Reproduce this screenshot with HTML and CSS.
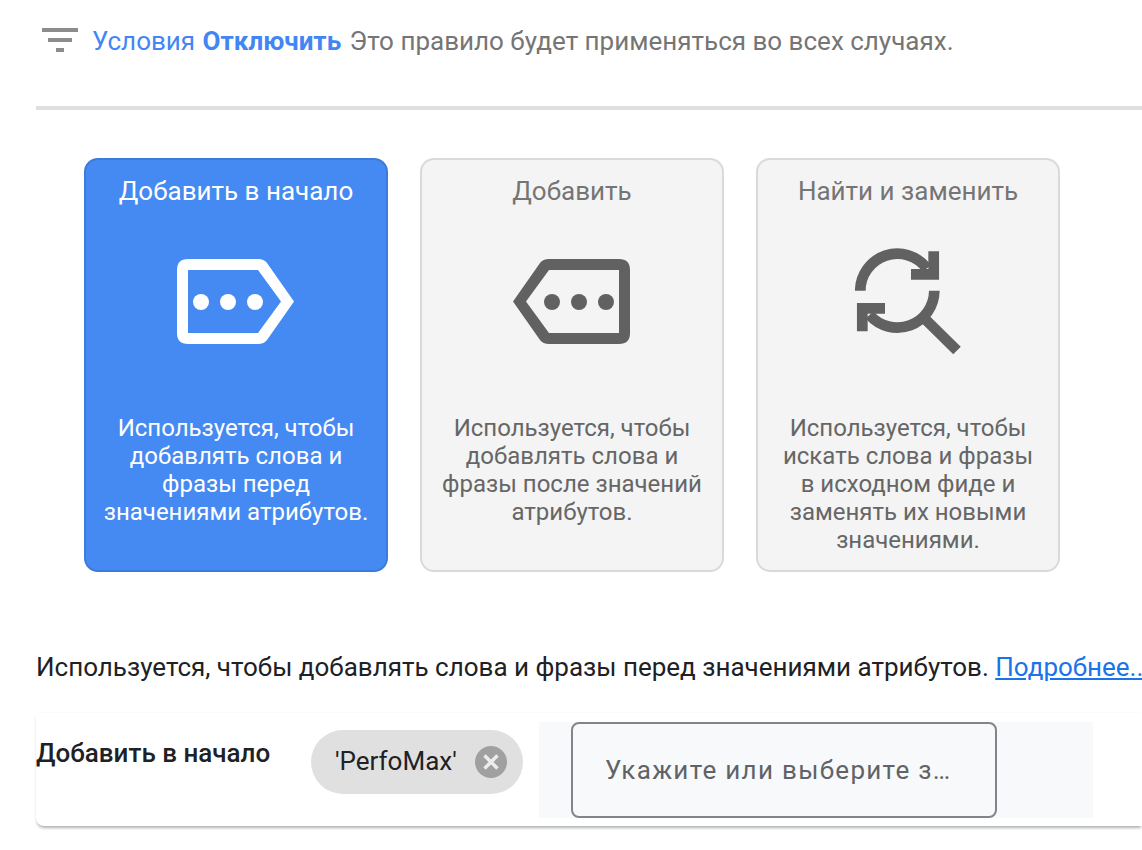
FILE: index.html
```html
<!DOCTYPE html>
<html lang="ru">
<head>
  <meta charset="UTF-8" />
  <meta name="viewport" content="width=device-width, initial-scale=1" />
  <title>Правило</title>
  <link rel="stylesheet" href="styles.css">
</head>
<body>
  <div class="conditions">
    <svg class="filter-icon" width="36" height="24" viewBox="0 0 36 24">
      <rect x="0" y="0" width="36" height="4" />
      <rect x="6" y="10" width="24" height="4" />
      <rect x="14" y="20" width="8" height="4" />
    </svg>
    <span class="conditions-text">
      <a class="cond-link">Условия</a>
      <a class="cond-link cond-off">Отключить</a>
      Это правило будет применяться во всех случаях.
    </span>
  </div>

  <div class="cards">
    <div class="card selected">
      <div class="card-title">Добавить в начало</div>
      <div class="card-icon">
        <svg class="tag-icon flip" width="117" height="85" viewBox="0 0 117 85">
          <path fill-rule="evenodd" d="M0 42.5 L27 4 Q30 0 36 0 H106 Q117 0 117 11 V74 Q117 85 106 85 H36 Q30 85 27 81 Z M36 11 L13 42.5 L36 74 H106 V11 Z" />
          <circle cx="39" cy="43" r="8" />
          <circle cx="66" cy="43" r="8" />
          <circle cx="93" cy="43" r="8" />
        </svg>
      </div>
      <div class="card-desc">Используется, чтобы добавлять слова и фразы перед значениями атрибутов.</div>
    </div>
    <div class="card">
      <div class="card-title">Добавить</div>
      <div class="card-icon">
        <svg class="tag-icon" width="117" height="85" viewBox="0 0 117 85">
          <path fill-rule="evenodd" d="M0 42.5 L27 4 Q30 0 36 0 H106 Q117 0 117 11 V74 Q117 85 106 85 H36 Q30 85 27 81 Z M36 11 L13 42.5 L36 74 H106 V11 Z" />
          <circle cx="39" cy="43" r="8" />
          <circle cx="66" cy="43" r="8" />
          <circle cx="93" cy="43" r="8" />
        </svg>
      </div>
      <div class="card-desc">Используется, чтобы добавлять слова и фразы после значений атрибутов.</div>
    </div>
    <div class="card">
      <div class="card-title">Найти и заменить</div>
      <div class="card-icon">
        <svg class="replace-icon" width="106" height="107" viewBox="0 0 106 107">
          <path d="M5.3 42.7 A37 37 0 0 1 71.8 20.4" />
          <path d="M78.7 3.3 V26.4 H56" />
          <path d="M79.3 42.7 A37 37 0 0 1 14.5 67" />
          <path d="M7.3 83.3 V60.3 H30" />
          <path d="M70 71 L102 102.5" />
        </svg>
      </div>
      <div class="card-desc">Используется, чтобы искать слова и фразы в исходном фиде и заменять их новыми значениями.</div>
    </div>
  </div>

  <p class="hint">Используется, чтобы добавлять слова и фразы перед значениями атрибутов. <a class="hint-link">Подробнее...</a></p>

  <div class="panel">
    <div class="panel-label">Добавить в начало</div>
    <div class="chip">
      <span class="chip-text">'PerfoMax'</span>
      <svg class="chip-close" width="32" height="32" viewBox="0 0 32 32">
        <circle cx="16" cy="16" r="16" />
        <path d="M9.5 9.5 L22.5 22.5 M22.5 9.5 L9.5 22.5" />
      </svg>
    </div>
    <div class="input-zone">
      <div class="input-box">
        <span class="placeholder">Укажите или выберите значение</span>
      </div>
    </div>
  </div>
</body>
</html>
```

FILE: styles.css
```css
html, body {
  margin: 0;
  height: 100%;
  overflow: hidden;
}
body {
  font-family: Roboto, "Liberation Sans", sans-serif;
  font-size: 26px;
  line-height: 28px;
  background: #fff;
  padding-left: 36px;
}
.conditions {
  display: flex;
  align-items: flex-start;
  gap: 14px;
  height: 79px;
  padding: 27px 0 0 6px;
  border-bottom: 4px solid #e0e0e0;
}
.filter-icon {
  margin-top: 1px;
  fill: #8c8c8c;
  flex-shrink: 0;
}
.conditions-text {
  color: #757575;
  white-space: nowrap;
}
.cond-link {
  color: #4285f4;
}
.cond-off {
  margin: 0 2px 0 1px;
  font-weight: 700;
}
.cards {
  display: flex;
  gap: 32px;
  margin-top: 48px;
  padding-left: 48px;
}
.card {
  box-sizing: border-box;
  width: 304px;
  height: 414px;
  padding: 17px 16px 0;
  border: 2px solid #dadada;
  border-radius: 14px;
  background: #f4f4f4;
  color: #666;
  text-align: center;
}
.card-title {
  color: #757575;
}
.selected .card-title {
  color: #fff;
}
.card.selected {
  background: #4589f2;
  border-color: #3c7bdc;
  color: #fff;
}
.card-icon {
  display: flex;
  justify-content: center;
  align-items: center;
  height: 130px;
  margin-top: 31px;
}
.tag-icon {
  fill: #616161;
  margin-right: 1px;
}
.selected .tag-icon {
  fill: #fff;
}
.flip {
  transform: scaleX(-1);
}
.replace-icon path {
  fill: none;
  stroke: #616161;
  stroke-width: 10.7;
}
.card-desc {
  margin-top: 48px;
  font-size: 24px;
}
.hint {
  margin: 81px 0 0;
  color: #202124;
  white-space: nowrap;
}
.hint-link {
  color: #1a73e8;
  text-decoration: underline;
}
.panel {
  display: flex;
  align-items: flex-start;
  height: 113px;
  margin-top: 32px;
  background: #fff;
  border-bottom-left-radius: 8px;
  box-shadow: 0 3px 3px -1px rgba(60, 64, 67, .4), 0 -1px 1px -1px rgba(60, 64, 67, .2);
}
.panel-label {
  width: 275px;
  margin-top: 26px;
  font-weight: 500;
  color: #202124;
  white-space: nowrap;
}
.chip {
  display: flex;
  align-items: center;
  justify-content: space-between;
  box-sizing: border-box;
  width: 212px;
  height: 64px;
  margin-top: 17px;
  padding: 0 16px 0 24px;
  border-radius: 32px;
  background: #e0e0e0;
  color: #202124;
}
.chip-text {
  margin-top: -2px;
}
.chip-close circle {
  fill: #a0a0a0;
}
.chip-close path {
  stroke: #ececec;
  stroke-width: 3.5;
  fill: none;
}
.input-zone {
  box-sizing: border-box;
  width: 554px;
  height: 96px;
  margin: 9px 0 0 16px;
  padding-left: 32px;
  background: #f8f9fa;
}
.input-box {
  box-sizing: border-box;
  display: flex;
  align-items: center;
  width: 426px;
  height: 96px;
  padding: 0 41px 0 32px;
  border: 2px solid #80868b;
  border-radius: 8px;
  color: #5f6368;
}
.placeholder {
  overflow: hidden;
  white-space: nowrap;
  text-overflow: ellipsis;
  letter-spacing: 1.3px;
}
```
